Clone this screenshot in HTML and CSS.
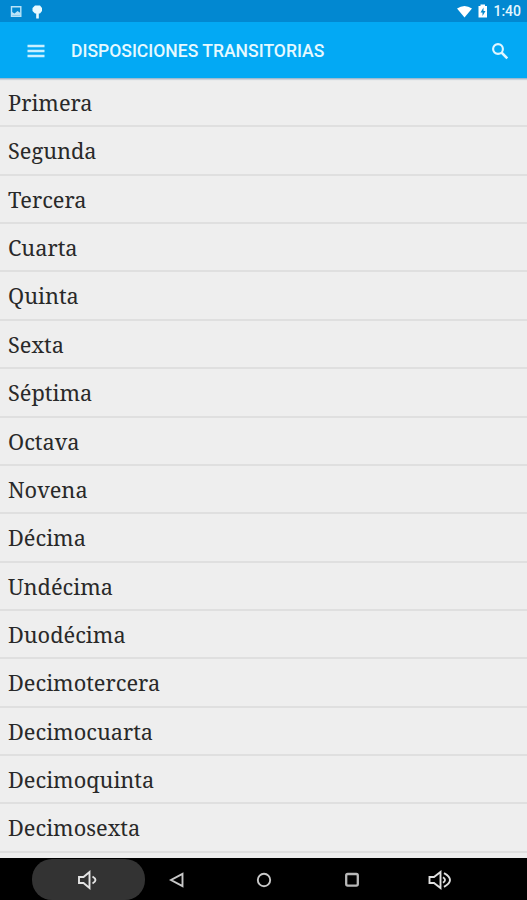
FILE: index.html
```html
<!DOCTYPE html>
<html lang="es">
<head>
<meta charset="utf-8">
<title>Disposiciones transitorias</title>
<link rel="stylesheet" href="styles.css">
</head>
<body>
<div class="status">
  <svg class="notifications" width="44" height="16" viewBox="0 0 44 16">
    <path d="M2.500 2.800h9.300v9.500H2.500z" fill="none" stroke="#b9e3f8" stroke-width="1.400"/>
    <path d="M3 11.500V8l2.500 1.500L8.500 7l3 2v2.500z" fill="#b9e3f8"/>
    <path d="M26 1.500h5l2 2.500v3l-2 2.500h-1.200v5h-2.600v-5H26L23.500 7V4z" fill="#e9faff"/>
  </svg>
  <div class="indicators">
    <svg width="32" height="16" viewBox="0 0 32 16">
      <path d="M0 4.500Q7.500-.5 15 4.500L7.500 13.500z" fill="#fff"/>
      <path d="M21.500 2h2V.500h4.500V2h2v11.500h-8.500z" fill="#fff"/>
      <path d="M26.500 3.500 23.500 8.500h2V12l3-5h-2z" fill="#078acb"/>
    </svg>
    <span>1:40</span>
  </div>
</div>
<header class="appbar">
  <svg width="20" height="16" viewBox="0 0 20 16"><path d="M1.500 3h17M1.500 8h17M1.500 13h17" stroke="#c9f0ff" stroke-width="2.500"/></svg>
  <h1>DISPOSICIONES TRANSITORIAS</h1>
  <svg class="search" width="18" height="18" viewBox="0 0 18 18" fill="none" stroke="#e0f6ff"><circle cx="7" cy="7" r="4.900" stroke-width="2.100"/><path d="m10.500 10.500 5.800 5.800" stroke-width="2.500"/></svg>
</header>
<ul class="list">
  <li>Primera</li><li>Segunda</li><li>Tercera</li><li>Cuarta</li>
  <li>Quinta</li><li>Sexta</li><li>Séptima</li><li>Octava</li>
  <li>Novena</li><li>Décima</li><li>Undécima</li><li>Duodécima</li>
  <li>Decimotercera</li><li>Decimocuarta</li><li>Decimoquinta</li><li>Decimosexta</li>
</ul>
<nav class="navbar">
  <div class="key active"><svg width="24" height="20" viewBox="0 0 24 20" fill="none" stroke="#e4e4e4" stroke-width="1.900"><path d="M2 7h4.500L12.500 2v16l-6-5H2z"/><path d="M15.500 6.500q6 3.500 0 7"/></svg></div>
  <div class="key"><svg width="24" height="20" viewBox="0 0 24 20" fill="none" stroke="#c8c8c8" stroke-width="1.900"><path d="M18.500 3.800v12.400L7 10z"/></svg></div>
  <div class="key"><svg width="24" height="20" viewBox="0 0 24 20" fill="none" stroke="#c8c8c8" stroke-width="1.900"><circle cx="12" cy="10" r="6.200"/></svg></div>
  <div class="key"><svg width="24" height="20" viewBox="0 0 24 20" fill="none" stroke="#b8b8b8" stroke-width="2.300"><rect x="6.200" y="4" width="11.600" height="11.600" rx="1.500"/></svg></div>
  <div class="key"><svg width="24" height="20" viewBox="0 0 24 20" fill="none" stroke="#e0e0e0" stroke-width="1.900"><path d="M1.500 7H6l6.500-5v16L6 13H1.500z"/><path d="M15 7.200q4 2.800 0 5.600M16 3.200q12 6.800 0 13.600"/></svg></div>
</nav>
</body>
</html>
```
FILE: styles.css
```css
* { box-sizing: border-box; }
body {
  margin: 0;
  height: 900px;
  display: flex;
  flex-direction: column;
  overflow: hidden;
  background: #eee;
  font-family: Roboto, sans-serif;
}
.status {
  flex: none;
  height: 22px;
  padding: 4px 6px 0 9px;
  display: flex;
  justify-content: space-between;
  background: #0288d1;
  color: #e4f7ff;
}
.indicators {
  display: flex;
  gap: 4px;
  font-size: 14px;
  font-weight: 500;
  line-height: 15px;
}
.appbar {
  flex: none;
  height: 57px;
  padding: 1px 18px 0 26px;
  display: flex;
  align-items: center;
  background: #03a9f4;
  border-bottom: 1px solid #9dbbd0;
  box-shadow: 0 1px 1px #cbd2dc;
}
.appbar h1 {
  margin: 1px 0 0 25px;
  color: #e6f9ff;
  font-size: 17.55px;
  font-weight: 500;
  white-space: nowrap;
}
.search { margin-left: auto; }
.list {
  flex: 1;
  min-height: 0;
  margin: 0;
  padding: 0;
  list-style: none;
  overflow: hidden;
  font-family: "Noto Serif", "DejaVu Serif Condensed", "DejaVu Serif", serif;
  font-size: 21.75px;
  color: #292929;
}
.list li {
  height: 48.36px;
  padding-left: 8px;
  line-height: 48.5px;
  border-bottom: 2px solid #dfdfdf;
}
.navbar {
  flex: none;
  height: 42px;
  padding: 1px 31px 0 32px;
  display: grid;
  grid-template-columns: 113px 62px 113px 63px 113px;
  background: #000;
}
.key {
  display: flex;
  align-items: center;
  justify-content: center;
}
.active {
  border-radius: 20px;
  background: #333;
}
```
